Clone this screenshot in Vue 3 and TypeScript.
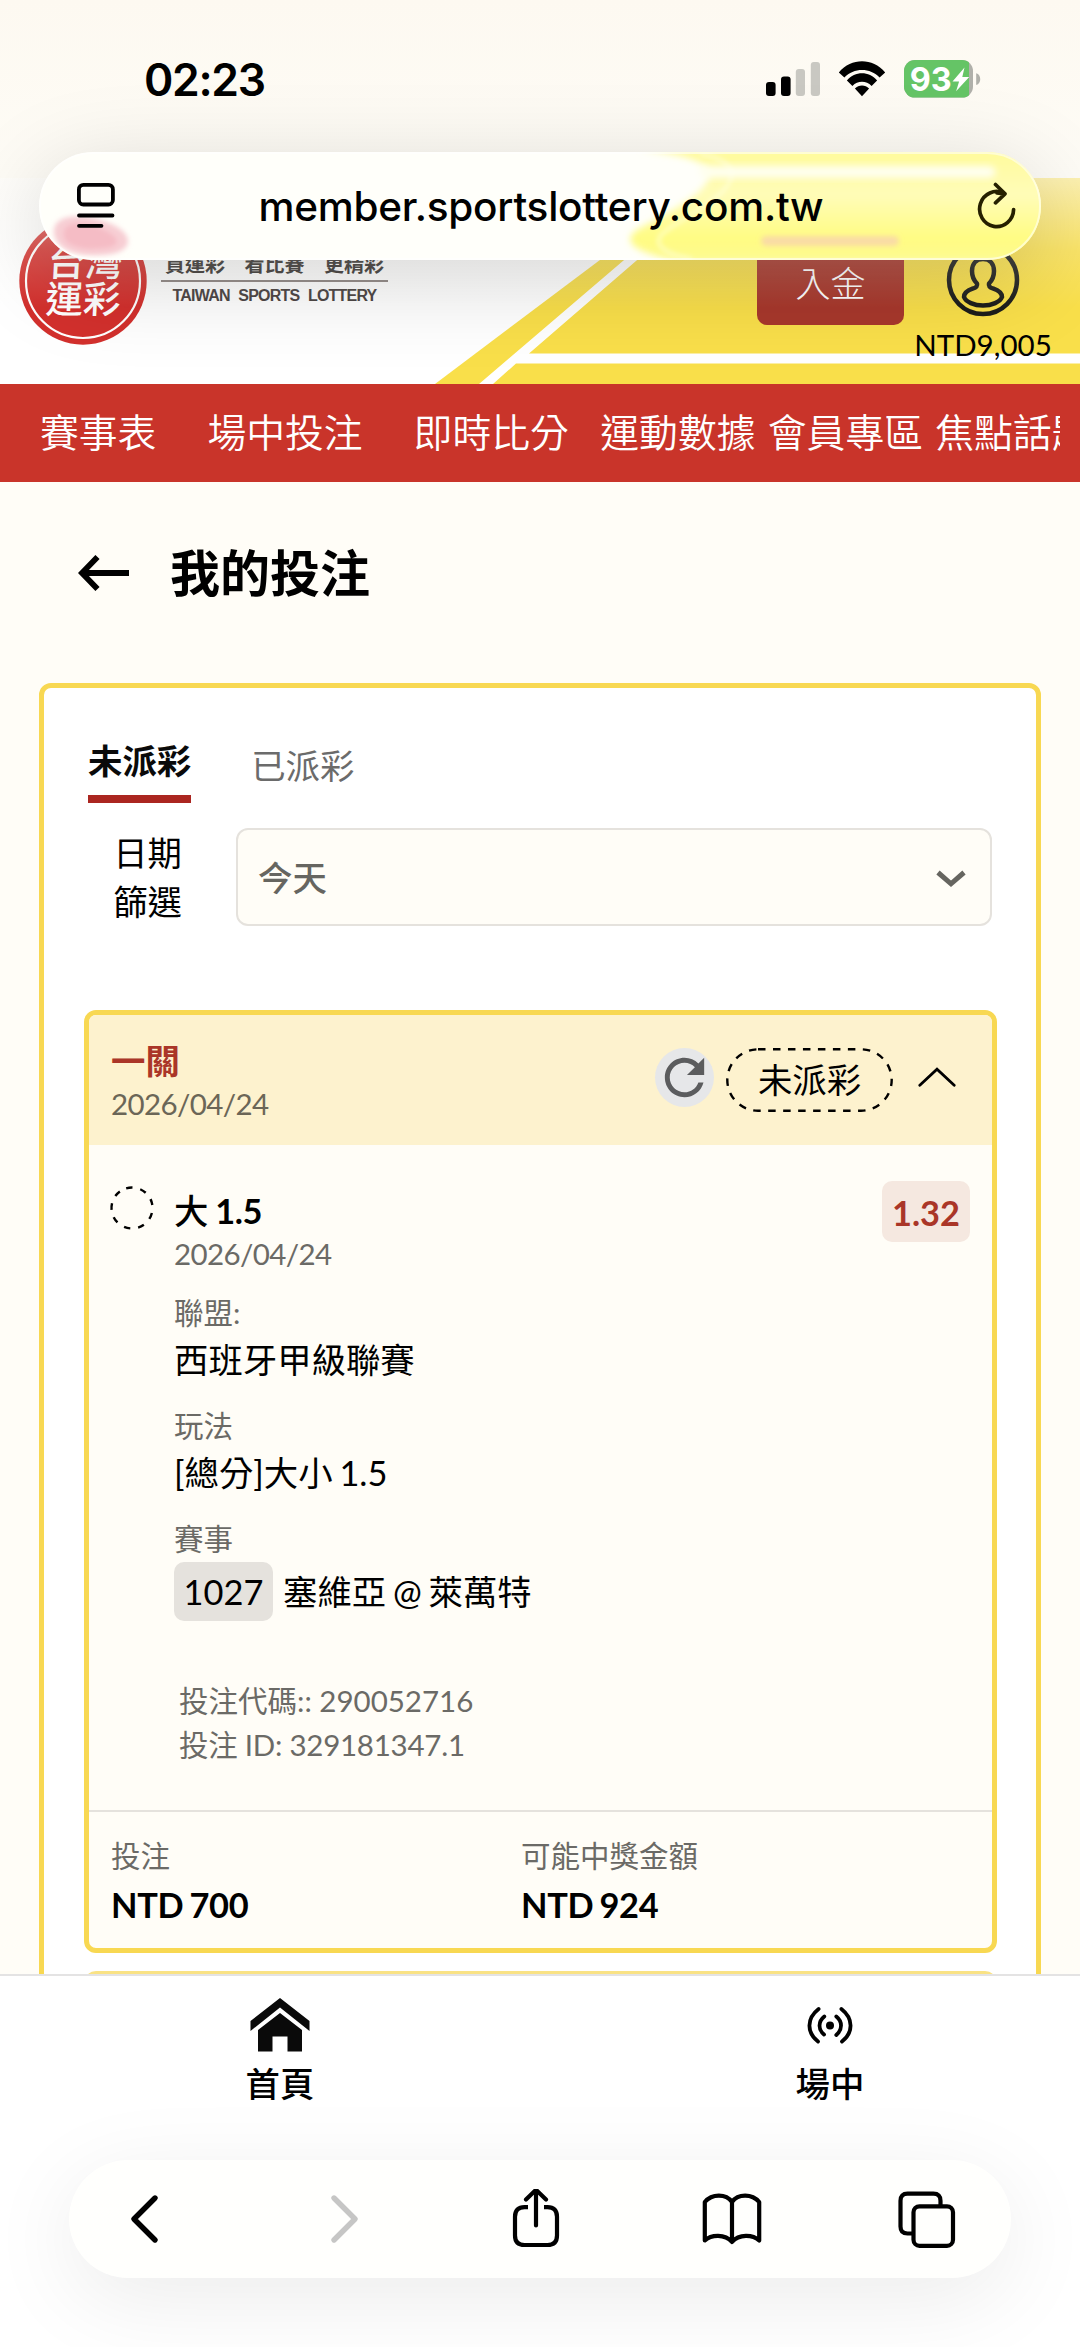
<script setup lang="ts">
interface Detail {
  label: string
  value: string
}

const navItems: string[] = ['賽事表', '場中投注', '即時比分', '運動數據', '會員專區', '焦點話題']

const details: Detail[] = [
  { label: '聯盟:', value: '西班牙甲級聯賽' },
  { label: '玩法', value: '[總分]大小 1.5' },
]

const wagers: Detail[] = [
  { label: '投注', value: 'NTD 700' },
  { label: '可能中獎金額', value: 'NTD 924' },
]
</script>

<template>
  <div class="screen">
    <div class="status">
      <span class="clock">02:23</span>
      <div class="status-icons">
        <svg class="signal" width="54" height="34" viewBox="0 0 54 34">
          <rect x="0" y="20" width="9.6" height="14" rx="3" fill="#000" />
          <rect x="15" y="14.6" width="9.6" height="19.4" rx="3" fill="#000" />
          <rect x="29.8" y="7" width="9.2" height="27" rx="3" fill="#c9c8c2" />
          <rect x="44.8" y="0" width="9.2" height="34" rx="3" fill="#c9c8c2" />
        </svg>
        <svg class="wifi" width="48" height="36" viewBox="0 0 48 36">
          <path d="M0.8 11.4C13.5 -3.5 34.5 -3.5 47.2 11.4L41.6 16.6C32.5 6.4 15.5 6.4 6.4 16.6Z" />
          <path d="M8.9 19.4C17.2 9.9 30.8 9.9 39.1 19.4L33.6 24.9C28.2 19.3 19.8 19.3 14.4 24.9Z" />
          <path d="M16.9 27.6C20.8 23.5 27.2 23.5 31.1 27.6L24 35.3Z" />
        </svg>
        <svg class="battery" width="78" height="38" viewBox="0 0 78 38">
          <defs>
            <clipPath id="cell"><rect width="69" height="37.6" rx="11" /></clipPath>
          </defs>
          <g clip-path="url(#cell)">
            <rect width="69" height="38" fill="#b0b0aa" />
            <rect width="65" height="38" fill="#65c466" />
          </g>
          <path d="M72.2 13.2c5.400 1.200 5.400 10.600 0 11.800z" fill="#b0b0aa" />
          <text x="5.8" y="31" class="battery-text" textLength="42" lengthAdjust="spacingAndGlyphs">93</text>
          <path d="M60.500 7.500L48.500 21.400h6.600l-3 9.900 13.100-14.400h-6.900z" fill="#fff" />
        </svg>
      </div>
    </div>

    <header class="site-header">
      <svg class="stripes" width="650" height="206" viewBox="430 178 650 206">
        <path d="M435 384L709 178H1080V384Z" fill="#f9df4a" />
        <path d="M479 384L720 178H732L529 353.500H1080V363.500H516L493 384Z" fill="#fff" />
      </svg>
      <svg class="logo" width="128" height="128" viewBox="0 0 128 128">
        <circle cx="64" cy="64" r="63.700" fill="#d3302d" />
        <circle cx="64" cy="64" r="57" fill="none" stroke="#fff" stroke-width="2.200" />
        <g class="logo-text" transform="translate(31 0) skewX(-3)">
          <text x="0" y="59">台灣</text>
          <text x="0" y="96.500">運彩</text>
        </g>
      </svg>
      <div class="brand">
        <div class="slogan"><span>買運彩</span><span>看比賽</span><span>更精彩</span></div>
        <div class="brand-en">TAIWAN SPORTS LOTTERY</div>
      </div>
      <button class="deposit">入金</button>
      <div class="account">
        <svg width="74" height="74" viewBox="0 0 74 74" fill="none" stroke="#1d1d1b" stroke-width="4.500">
          <circle cx="37" cy="37" r="34" />
          <path d="M37 16c-7 0-11 5-11 12 0 6 2 9.500 5 12.500 .8 3-1.200 4-4.500 5.200-5 1.800-8.500 3.800-8.500 8.300 2 5 10 8.500 19 8.500s17-3.500 19-8.500c0-4.500-3.500-6.500-8.500-8.300-3.300-1.200-5.300-2.200-4.500-5.200 3-3 5-6.500 5-12.500 0-7-4-12-11-12z" stroke-linejoin="round" />
        </svg>
        <span>NTD9,005</span>
      </div>
      <div class="header-fade"></div>
    </header>

    <nav class="site-nav">
      <div class="nav-clip">
        <a v-for="item in navItems" :key="item">{{ item }}</a>
      </div>
    </nav>

    <main>
      <div class="page-title">
        <svg width="52" height="36" viewBox="0 0 52 36" fill="none" stroke="#000" stroke-width="5.800">
          <path d="M51 18H4" />
          <path d="M19.500 2L4 18 19.500 34" stroke-linejoin="miter" />
        </svg>
        <h1>我的投注</h1>
      </div>

      <section class="panel">
        <div class="tabs">
          <div class="tab active">未派彩</div>
          <div class="tab">已派彩</div>
        </div>

        <div class="filter">
          <label>日期<br />篩選</label>
          <div class="select">
            <span>今天</span>
            <svg width="32" height="20" viewBox="0 0 32 20" fill="none" stroke="#666560" stroke-width="5">
              <path d="M3 3.500L16 14.800 29 3.500" />
            </svg>
          </div>
        </div>

        <article class="ticket">
          <div class="ticket-head">
            <div class="ticket-title">
              <strong>一關</strong>
              <time>2026/04/24</time>
            </div>
            <div class="refresh">
              <svg width="59" height="59" viewBox="0 0 24 24" fill="#5b5c5e">
                <path d="M17.650 6.350C16.200 4.900 14.210 4 12 4c-4.420 0-7.990 3.580-7.990 8s3.570 8 7.990 8c3.730 0 6.840-2.550 7.730-6h-2.080c-.82 2.330-3.040 4-5.650 4-3.310 0-6-2.690-6-6s2.690-6 6-6c1.660 0 3.140.69 4.220 1.780L13 11h7V4l-2.350 2.350z" />
              </svg>
            </div>
            <div class="state">
              <svg width="167" height="64" viewBox="0 0 167 64" fill="none">
                <rect x="1.300" y="1.300" width="164.400" height="61.400" rx="30.700" stroke="#000" stroke-width="2.400" stroke-dasharray="7.500 7.480" />
              </svg>
              <span>未派彩</span>
            </div>
            <svg class="collapse" width="38" height="20" viewBox="0 0 38 20" fill="none" stroke="#000" stroke-width="2.800" stroke-linecap="round">
              <path d="M1.800 18.200L19 2.200 36.200 18.200" />
            </svg>
          </div>

          <div class="ticket-body">
            <svg class="pending" width="44" height="44" viewBox="0 0 44 44" fill="none">
              <circle cx="22" cy="22" r="20.500" stroke="#000" stroke-width="2.400" stroke-dasharray="6.400 7.912" transform="rotate(-106.500 22 22)" />
            </svg>
            <div class="pick">
              <div class="pick-name">大 <b>1.5</b></div>
              <time>2026/04/24</time>
              <div v-for="d in details" :key="d.label" class="detail">
                <small>{{ d.label }}</small>
                <p>{{ d.value }}</p>
              </div>
              <div class="detail match">
                <small>賽事</small>
                <p><b>1027</b><span>塞維亞 @ 萊萬特</span></p>
              </div>
              <div class="codes">
                <div>投注代碼:: 290052716</div>
                <div class="bet-id">投注 ID: 329181347.1</div>
              </div>
            </div>
            <div class="odds">1.32</div>
          </div>

          <div class="ticket-foot">
            <div v-for="w in wagers" :key="w.label">
              <small>{{ w.label }}</small>
              <strong>{{ w.value }}</strong>
            </div>
          </div>
        </article>
        <article class="ticket next"></article>
      </section>
    </main>

    <footer class="bottom">
      <div class="bottom-tabs">
        <div class="bottom-tab">
          <svg width="60" height="54" viewBox="0 0 60 54" fill="#0a0a0a">
            <path d="M30 0L59.500 23V33L30 9.500 .5 33V23Z" />
            <path d="M30 15L52 32V53.500H37.500V38.500H22.500V53.500H8V32Z" />
          </svg>
          <span>首頁</span>
        </div>
        <div class="bottom-tab">
          <svg width="60" height="54" viewBox="0 0 60 54" fill="none" stroke="#000" stroke-width="3.800" stroke-linecap="round">
            <circle cx="30" cy="27.500" r="4" fill="#000" stroke="none" />
            <path d="M18.600 11C6.500 20.500 6.500 34.500 18 43.500" />
            <path d="M41.400 11C53.500 20.500 53.500 34.500 42 43.500" />
            <path d="M24.300 18.500C18 23.500 18 31.500 24 36.500" />
            <path d="M36.300 18.500C42.600 23.500 42.600 31.500 36.300 37" />
          </svg>
          <span>場中</span>
        </div>
      </div>
      <div class="toolbar">
        <svg width="60" height="60" viewBox="0 0 60 60" class="tool">
          <path d="M40 9L19 30 40 51" stroke-width="5.400" />
        </svg>
        <svg width="60" height="60" viewBox="0 0 60 60" class="tool disabled">
          <path d="M23 9L44 30 23 51" stroke-width="5.400" />
        </svg>
        <svg width="60" height="60" viewBox="0 0 60 60" class="tool">
          <path d="M22 18.200H18.500Q9 18.200 9 27.700V46.500Q9 56 18.500 56H41.500Q51 56 51 46.500V27.700Q51 18.200 41.500 18.200H38" stroke-linecap="butt" />
          <path d="M30 36.500V2M20 10.500L30 0.800 40 10.500" />
        </svg>
        <svg width="60" height="60" viewBox="0 0 60 60" class="tool">
          <path d="M30 13C24 4.500 10 4.500 2.800 13V51.500C9 45.500 23 44.500 30 53C37 44.500 51 45.500 57.200 51.500V13C50 4.500 36 4.500 30 13ZM30 13V52" />
        </svg>
        <svg width="60" height="60" viewBox="0 0 60 60" class="tool">
          <path d="M43.500 17.500V11.700Q43.500 4.700 36.500 4.700H10.500Q3.500 4.700 3.500 11.700V37.500Q3.500 44.500 10.500 44.500H16" stroke-linecap="butt" />
          <rect x="16.500" y="17.300" width="39.500" height="39.500" rx="6" />
        </svg>
      </div>
    </footer>

    <div class="address-bar">
      <svg class="glass" width="1002" height="108" viewBox="39 152 1002 108">
        <defs>
          <linearGradient id="tint" x1="0" y1="152" x2="0" y2="260" gradientUnits="userSpaceOnUse">
            <stop offset="0" stop-color="#fffb9c" />
            <stop offset=".4" stop-color="#fffcb8" />
            <stop offset=".8" stop-color="#fffc82" />
            <stop offset="1" stop-color="#fdfa90" />
          </linearGradient>
          <filter id="soft" x="-20%" y="-40%" width="140%" height="180%"><feGaussianBlur stdDeviation="3.500" /></filter>
          <filter id="softer" x="-20%" y="-80%" width="140%" height="260%"><feGaussianBlur stdDeviation="2.500" /></filter>
        </defs>
        <path d="M640 150C690 155 716 164 708 180C700 196 670 212 640 228C620 240 630 252 680 262H1060V140Z" fill="url(#tint)" filter="url(#soft)" />
        <path d="M700 154C735 160 738 176 722 192C706 208 672 224 661 235C654 244 662 254 692 259" fill="none" stroke="#fffff0" stroke-opacity=".6" stroke-width="3" filter="url(#softer)" />
        <path d="M700 166H990Q1002 172 990 178H700Z" fill="#fffff0" filter="url(#soft)" />
        <rect x="761" y="236" width="138" height="10" rx="5" fill="#f9dba6" filter="url(#softer)" />
        <path d="M54 234C52 212 84 214 106 222C136 232 136 254 102 255C74 257 56 248 54 234Z" fill="#f7cdd3" filter="url(#softer)" />
        <path d="M62 234C62 218 88 220 104 228C124 238 124 248 100 250C78 252 62 246 62 234Z" fill="#f5bcc5" stroke="#f9d4d9" stroke-width="2" filter="url(#softer)" />
        <rect x="40" y="153" width="1000" height="106" rx="53" fill="none" stroke="#fff" stroke-opacity=".55" stroke-width="2" />
      </svg>
      <svg class="reader" width="40" height="48" viewBox="0 0 40 48" fill="none" stroke="#000" stroke-width="3.800" stroke-linecap="round">
        <rect x="2.900" y="2.900" width="34" height="19.600" rx="4.500" />
        <path d="M3 33.500H36.500M3 43.800H25.500" />
      </svg>
      <span class="url">member.sportslottery.com.tw</span>
      <svg class="reload" width="40" height="48" viewBox="0 0 40 48" fill="none" stroke="#262000" stroke-width="3.700" stroke-linecap="round" stroke-linejoin="round">
        <path d="M36.600 27.500A17 17.500 0 1 1 27 11.300" />
        <path d="M18.500 2.500L28 11.800 18.500 20.800M28 11.800L20 10.800" />
      </svg>
    </div>
  </div>
</template>

<style>
body {
  margin: 0;
  background: #fffdf7;
}
</style>

<style scoped>
* {
  box-sizing: border-box;
}
.screen {
  position: relative;
  width: 1080px;
  height: 2347px;
  overflow: hidden;
  display: flex;
  flex-direction: column;
  background: #fffdf7;
  color: #000;
  font-family: Lato, 'Noto Sans CJK TC', sans-serif;
  font-size: 34.4px;
  line-height: 43px;
}
svg {
  display: block;
  flex: none;
}
h1,
p {
  margin: 0;
}

/* status bar */
.status {
  flex: none;
  height: 178px;
  padding: 52px 100px 0 144px;
  display: flex;
  justify-content: space-between;
  background: linear-gradient(#fdf9f1, #fefcf6);
  font-family: Inter, sans-serif;
}
.clock {
  font-size: 44.500px;
  line-height: 56px;
  font-weight: 600;
  letter-spacing: -1.300px;
}
.status-icons {
  display: flex;
  align-items: flex-start;
}
.signal {
  margin: 10px 18px 0 0;
}
.wifi {
  margin: 9px 18px 0 0;
}
.battery {
  margin: 8px -2px 0 0;
}
.battery-text {
  font: 700 33px Inter, sans-serif;
  fill: #fff;
}

/* site header */
.site-header {
  position: relative;
  flex: none;
  height: 206px;
  padding-left: 19px;
  display: flex;
  align-items: flex-start;
  background: #fff;
}
.stripes {
  position: absolute;
  right: 0;
  top: 0;
}
.header-fade {
  position: absolute;
  left: 0;
  right: 0;
  top: 0;
  height: 130px;
  background: linear-gradient(rgba(254, 252, 246, 0.6), rgba(254, 252, 246, 0.18) 55%, rgba(254, 252, 246, 0));
}
.logo {
  margin-top: 39px;
}
.logo-text {
  font: 500 37.500px 'Noto Sans CJK TC', sans-serif;
  fill: #fff;
}
.brand {
  width: 227px;
  margin: 74px 0 0 14px;
}
.slogan {
  height: 30px;
  padding: 0 4px;
  display: flex;
  justify-content: space-between;
  border-bottom: 2px solid #8f8684;
  color: #3c3836;
  font: 700 20px/24px 'Noto Sans CJK TC', sans-serif;
}
.brand-en {
  margin-top: 4px;
  text-align: center;
  color: #4a4342;
  font: 700 16px/20px 'Liberation Sans', sans-serif;
  letter-spacing: -0.8px;
  word-spacing: 5px;
  white-space: nowrap;
}
.deposit {
  position: relative;
  width: 147px;
  height: 87px;
  margin: 60px 0 0 369px;
  padding: 0;
  border: 0;
  border-radius: 10px;
  background: #a8382c;
  color: #fff;
  font: 300 35px/82px 'Noto Sans CJK TC', sans-serif;
}
.account {
  position: relative;
  width: 140px;
  margin: 65px 0 0 9px;
  display: flex;
  flex-direction: column;
  align-items: center;
  font-size: 29.500px;
}
.account span {
  margin-top: 6px;
  line-height: 43px;
  white-space: nowrap;
}

/* red navigation */
.site-nav {
  flex: none;
  height: 98px;
  padding: 0 20px;
  background: #c9342a;
}
.nav-clip {
  height: 98px;
  padding-left: 20px;
  display: flex;
  overflow: hidden;
  color: #fff;
  font: 350 38.800px/93px 'Noto Sans CJK TC', sans-serif;
  white-space: nowrap;
}
.nav-clip a {
  flex: none;
  margin-right: 12.300px;
}
.nav-clip a:nth-child(1),
.nav-clip a:nth-child(2) {
  margin-right: 51px;
}
.nav-clip a:nth-child(3) {
  margin-right: 31.500px;
}

/* page */
main {
  flex: 1;
  min-height: 0;
  overflow: hidden;
  display: flex;
  flex-direction: column;
}
.page-title {
  flex: none;
  height: 201px;
  padding: 73px 0 0 78px;
  display: flex;
}
.page-title h1 {
  margin: -18px 0 0 40px;
  font: 700 50px/66px 'Noto Sans CJK TC', sans-serif;
}
.panel {
  flex: none;
  height: 1400px;
  margin: 0 39px;
  border: 5px solid #f8d852;
  border-radius: 12px;
  background: #fff;
}
.tabs {
  height: 115px;
  padding-left: 44px;
  display: flex;
  align-items: flex-end;
}
.tab {
  margin-bottom: 16px;
  margin-left: 60px;
  color: #6b6b6b;
}
.tab.active {
  margin: 0;
  height: 64px;
  border-bottom: 8px solid #ab2620;
  color: #0a0a0a;
  font-weight: 700;
}
.filter {
  margin-top: 25px;
  height: 98px;
  padding-left: 44px;
  display: flex;
}
.filter label {
  width: 94px;
  text-align: right;
  line-height: 49px;
}
.select {
  width: 756px;
  margin-left: 54px;
  padding: 0 23px 0 20px;
  display: flex;
  align-items: center;
  justify-content: space-between;
  border: 2.500px solid #e5e2dd;
  border-radius: 12px;
  background: #fffdf7;
  color: #666560;
  font-weight: 500;
}
.select svg {
  margin-top: 4px;
}

/* ticket */
.ticket {
  width: 913px;
  height: 943px;
  margin: 84px 0 0 40px;
  border: 5px solid #f8d852;
  border-radius: 12px;
  background: #fffdf7;
  overflow: hidden;
}
.ticket.next {
  margin-top: 18px;
  border-color: #f9e284;
}
.ticket small,
.ticket time {
  display: block;
  color: #6b6a66;
  font-size: 29.500px;
}
.ticket time {
  letter-spacing: -0.6px;
}
.ticket-head {
  height: 130px;
  padding: 0 36px 0 22px;
  display: flex;
  align-items: center;
  background: #fdf2ce;
}
.ticket-title {
  flex: 1;
  padding-top: 4px;
}
.ticket-title strong {
  display: block;
  color: #aa3628;
}
.ticket .ticket-title time {
  color: #6b6657;
}
.refresh {
  width: 59px;
  height: 59px;
  margin: -5px 12px 0 0;
  border-radius: 50%;
  background: #e6e7e9;
}
.state {
  position: relative;
  width: 167px;
  height: 64px;
  text-align: center;
  line-height: 63px;
}
.state svg {
  position: absolute;
  inset: 0;
}
.collapse {
  margin: -6px 0 0 25px;
}
.ticket-body {
  height: 665px;
  padding: 44px 22px 0;
  display: flex;
  align-items: flex-start;
}
.pending {
  margin: -3px 20px 0 -1px;
}
.pick {
  flex: 1;
}
.pick-name {
  font-weight: 500;
  letter-spacing: -0.4px;
  word-spacing: -1px;
}
.pick-name b {
  font-weight: 700;
}
.detail {
  height: 113px;
}
.pick > time {
  margin-bottom: 16px;
}
.detail small {
  line-height: 43px;
  margin-bottom: 4px;
}
.detail p {
  word-spacing: -2px;
}
.match small {
  margin-bottom: 2px;
}
.match p {
  display: flex;
  align-items: center;
  line-height: 59px;
  white-space: nowrap;
}
.match b {
  width: 99px;
  height: 59px;
  margin-right: 10px;
  border-radius: 10px;
  background: #e5e2dd;
  text-align: center;
  font-weight: 400;
}
.codes {
  margin: 49px 0 0 5px;
  color: #6b6a66;
  font-size: 29.500px;
  line-height: 44px;
}
.bet-id {
  letter-spacing: -0.25px;
}
.odds {
  width: 88px;
  height: 61px;
  margin-top: -8px;
  border-radius: 10px;
  background: #f5e8e0;
  color: #aa3628;
  text-align: center;
  font-weight: 700;
  line-height: 63px;
}
.ticket-foot {
  height: 138px;
  padding: 22px 22px 0;
  display: grid;
  grid-template-columns: 410px 1fr;
  border-top: 2.500px solid #e5e2dd;
}
.ticket-foot small {
  line-height: 44px;
  margin-bottom: 5px;
}
.ticket-foot strong {
  display: block;
  letter-spacing: -0.3px;
  word-spacing: -2px;
}

/* bottom */
.bottom {
  position: relative;
  flex: none;
  height: 373px;
  border-top: 2.500px solid #e4e3e3;
  background: #fff;
}
.bottom-tabs {
  height: 184px;
  padding: 22px 0 0 5px;
  display: grid;
  grid-template-columns: 550px 550px;
}
.bottom-tab {
  display: flex;
  flex-direction: column;
  align-items: center;
  font-weight: 500;
}
.bottom-tab span {
  margin-top: 10px;
}
.toolbar {
  width: 942px;
  height: 118px;
  margin: 0 69px;
  padding: 0 54px 0 46px;
  display: flex;
  align-items: center;
  justify-content: space-between;
  border-radius: 59px;
  background: #fffffd;
  box-shadow: 0 20px 90px rgba(0, 0, 0, 0.08);
}
.tool {
  fill: none;
  stroke: #000;
  stroke-width: 4.200;
  stroke-linecap: round;
  stroke-linejoin: round;
}
.tool.disabled {
  stroke: #c6c6c5;
}

/* floating address bar */
.address-bar {
  position: absolute;
  left: 39px;
  top: 152px;
  width: 1002px;
  height: 108px;
  padding: 0 24px 0 37px;
  display: flex;
  align-items: center;
  justify-content: space-between;
  border-radius: 54px;
  background: #fffffa;
  box-shadow: 0 20px 90px rgba(0, 0, 0, 0.17);
  font-family: Inter, sans-serif;
}
.glass {
  position: absolute;
  inset: 0;
  border-radius: 54px;
}
.reader,
.reload,
.url {
  position: relative;
}
.url {
  margin-right: 11px;
  padding-top: 2px;
  font-size: 40.500px;
  line-height: 108px;
  font-weight: 500;
  letter-spacing: -0.25px;
}
</style>
